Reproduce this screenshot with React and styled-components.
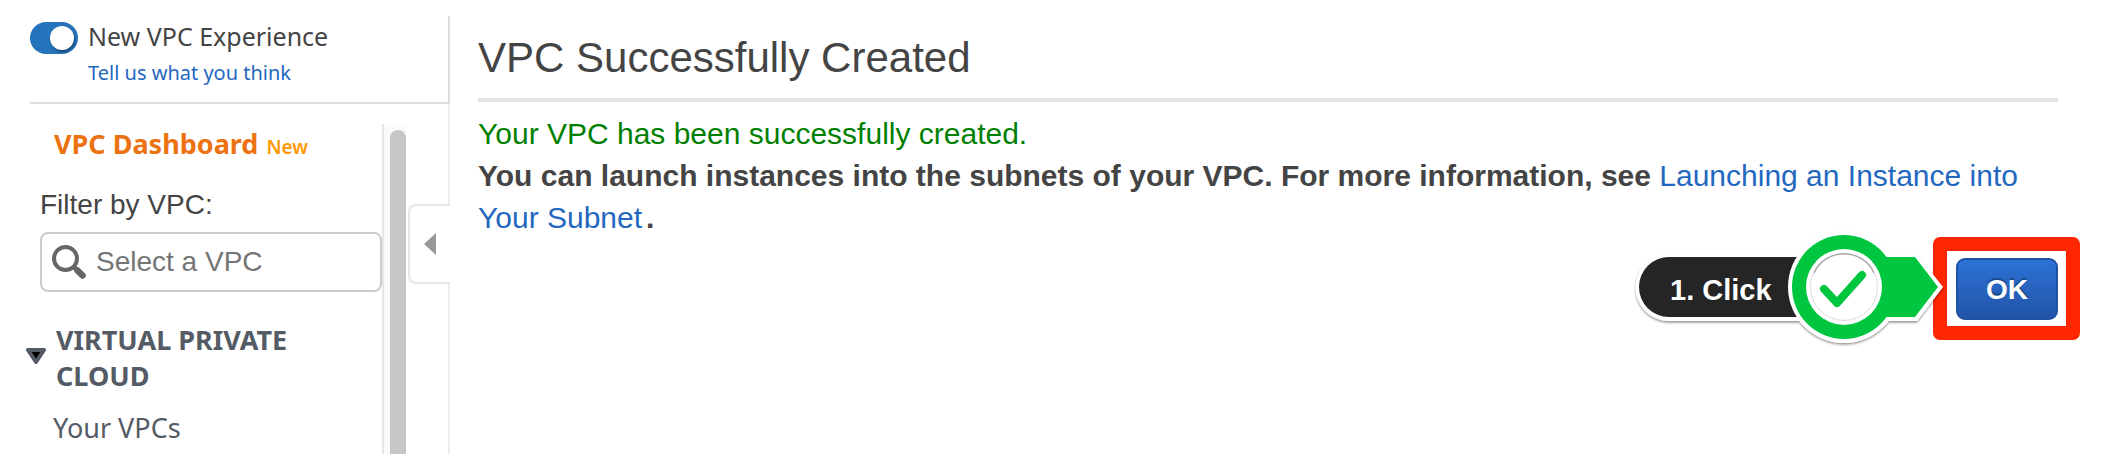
import React from "react";
import styled, { createGlobalStyle } from "styled-components";

const helvetica = `"Liberation Sans", Arial, sans-serif`;
const ember = `"Noto Sans", "Open Sans", sans-serif`;

const GlobalStyle = createGlobalStyle`
  *, *::before, *::after { box-sizing: border-box; }
  body { margin: 0; background: #fff; color: #444; font-family: ${helvetica}; }
  a { color: #2467bf; text-decoration: none; }
  button, input { font: inherit; color: inherit; }
`;

const Page = styled.div`
  display: flex;
  min-height: 100vh;
`;

const Sidebar = styled.aside`
  position: relative;
  flex: 0 0 450px;
  min-width: 0;
  display: flex;
  flex-direction: column;
  padding-top: 16px;
`;

const Experience = styled.div`
  display: flex;
  align-items: flex-start;
  gap: 10px;
  height: 88px;
  margin-left: 30px;
  padding-top: 6px;
  border-right: 2px solid #ddd;
  border-bottom: 2px solid #ddd;
  font-family: ${ember};
`;

const Toggle = styled.input`
  appearance: none;
  flex: none;
  display: flex;
  align-items: center;
  justify-content: flex-end;
  width: 48px;
  height: 32px;
  margin: 0;
  padding-right: 4px;
  border-radius: 16px;
  background: #2573bb;

  &::before {
    content: "";
    width: 24px;
    height: 24px;
    border-radius: 50%;
    background: #fff;
    box-shadow: 1px 2px 2px rgba(0, 0, 0, 0.35);
  }
  &:not(:checked) { justify-content: flex-start; padding: 0 4px; background: #879596; }
`;

const ExperienceText = styled.div`
  display: flex;
  flex-direction: column;
  gap: 8px;
  line-height: 28px;
`;

const ExperienceLabel = styled.label`
  font-size: 25px;
`;

const FeedbackLink = styled.a`
  font-size: 20px;
  line-height: 30px;
`;

const SidebarBody = styled.div`
  flex: 1;
  display: flex;
  border-right: 2px solid #eee;
  padding-top: 20px;
`;

const NavColumn = styled.nav`
  flex: 0 0 382px;
  min-width: 0;
  display: flex;
  flex-direction: column;
  color: #545b64;
  font-family: ${ember};
  font-size: 27px;
  line-height: 36px;
`;

const DashboardLink = styled.a`
  display: flex;
  align-items: baseline;
  gap: 8px;
  margin: 2px 0 0 54px;
  color: #ec7211;
  font-weight: 700;
`;

const NewTag = styled.span`
  color: #f90;
  font-size: 19px;
  font-weight: 600;
`;

const Filter = styled.div`
  margin: 22px 0 0 40px;
  display: flex;
  flex-direction: column;
  gap: 9px;
  color: #444;
  font-family: ${helvetica};
  font-size: 28px;
`;

const SearchBox = styled.div`
  display: flex;
  align-items: center;
  gap: 10px;
  height: 60px;
  padding: 0 10px;
  border: 2px solid #ccc;
  border-radius: 8px;

  svg { flex: none; }
`;

const SearchInput = styled.input`
  flex: 1;
  width: 100%;
  min-width: 0;
  padding: 0;
  border: 0;
  outline: 0;
  background: transparent;
  &::placeholder { color: #757575; opacity: 1; }
`;

const SectionButton = styled.button`
  display: flex;
  align-items: center;
  gap: 10px;
  margin: 30px 0 0 26px;
  padding: 0;
  border: 0;
  background: none;
  font-weight: 700;
  text-align: left;

  svg { flex: none; margin-bottom: 4px; }
  span { max-width: 260px; }
`;

const NavLink = styled.a`
  margin: 16px 0 0 53px;
  color: #545b64;
`;

const ScrollTrack = styled.div`
  width: 24px;
  padding-top: 6px;
  border-left: 2px solid #e6e6e6;
  background: #fafafa;
  display: flex;
  justify-content: flex-end;
`;

const ScrollThumb = styled.div`
  width: 16px;
  border-radius: 8px 8px 0 0;
  background: #c6c6c6;
`;

const CollapseButton = styled.button`
  position: absolute;
  top: 204px;
  right: 0;
  width: 42px;
  height: 80px;
  padding: 0 12px 0 14px;
  display: flex;
  align-items: center;
  border: 2px solid #e6e6e6;
  border-right: 0;
  border-radius: 8px 0 0 8px;
  background: #fff;
`;

const Main = styled.main`
  flex: 1;
  min-width: 0;
  padding: 32px 64px 0 28px;
`;

const Title = styled.h1`
  margin: 0;
  padding-bottom: 14px;
  border-bottom: 4px solid #e3e3e3;
  font-size: 42px;
  font-weight: 400;
  line-height: 52px;
`;

const Message = styled.p`
  margin: 0;
  font-size: 30px;
  line-height: 42px;
  font-weight: ${(p) => (p.$success ? 400 : 700)};
  color: ${(p) => (p.$success ? "#008000" : "#444")};

  a { font-weight: 400; margin-right: 4px; }
`;

const Messages = styled.div`
  padding-top: 11px;
`;

const Actions = styled.div`
  display: flex;
  justify-content: flex-end;
  padding-top: 19px;
`;

const Target = styled.div`
  position: relative;
`;

const OkButton = styled.button`
  display: block;
  width: 102px;
  height: 62px;
  padding: 2px 0 0;
  border: 2px solid #1f52a4;
  border-radius: 9px;
  background: linear-gradient(#2c72d4, #2254a8);
  color: #fff;
  font-size: 28px;
  font-weight: 700;
  text-shadow: 0 -2px 1px rgba(0, 0, 0, 0.3);
`;

const Highlight = styled.div`
  position: absolute;
  inset: -21px -22px -20px -23px;
  border: 14px solid #ff2600;
  border-radius: 7px;
  pointer-events: none;
`;

const Callout = styled.div`
  position: absolute;
  right: 100%;
  top: 50%;
  width: 324px;
  height: 116px;
  margin: -60px 10px 0 0;
  padding-top: 6px;
  display: flex;
  align-items: center;

  svg { position: absolute; inset: 0; overflow: visible; }
`;

const CalloutText = styled.span`
  position: relative;
  padding-left: 48px;
  color: #fff;
  font-size: 29px;
  font-weight: 700;
  line-height: 36px;
`;

function SearchIcon() {
  return (
    <svg width="34" height="34" viewBox="0 0 34 34" fill="none" stroke="#666" aria-hidden="true">
      <circle cx="13.500" cy="13.500" r="11.500" strokeWidth="4" />
      <path d="M22 22l3 3" strokeWidth="5" />
      <path d="M25.500 25.500l5 5" strokeWidth="6.500" strokeLinecap="round" />
    </svg>
  );
}

function CalloutShape() {
  return (
    <svg width="324" height="116" viewBox="0 0 324 116" aria-hidden="true">
      <defs>
        <filter id="lift" x="-10%" y="-10%" width="120%" height="120%">
          <feDropShadow dx="0" dy="1.500" stdDeviation="1" floodOpacity="0.450" />
        </filter>
      </defs>
      <g filter="url(#lift)">
        <path d="M47 25H295L321 58L295 92H47A33.500 33.500 0 0 1 47 25Z" fill="#fff" />
        <circle cx="222" cy="58" r="56" fill="#fff" />
      </g>
      <path d="M47 28H222V88H47A30 30 0 0 1 47 28Z" fill="#252525" />
      <circle cx="222" cy="58" r="56" fill="#fff" />
      <path d="M262 28H293L316 58L293 88H262Z" fill="#00c63f" />
      <circle cx="222" cy="58" r="52" fill="#00c63f" />
      <circle cx="222" cy="58" r="38" fill="#fff" />
      <circle cx="222" cy="58" r="33.500" fill="none" stroke="#ddd" />
      <path d="M192 44A33 33 0 0 1 252 44" fill="none" stroke="#aaa" strokeWidth="1.500" />
      <path d="M202 60L215 74L240 46" fill="none" stroke="#00c63f" strokeWidth="8" strokeLinecap="round" strokeLinejoin="round" />
    </svg>
  );
}

export default function App() {
  return (
    <>
      <GlobalStyle />
      <Page>
        <Sidebar>
          <Experience>
            <Toggle type="checkbox" id="experience" defaultChecked />
            <ExperienceText>
              <ExperienceLabel htmlFor="experience">New VPC Experience</ExperienceLabel>
              <FeedbackLink href="#feedback">Tell us what you think</FeedbackLink>
            </ExperienceText>
          </Experience>
          <SidebarBody>
            <NavColumn>
              <DashboardLink href="#dashboard">
                VPC Dashboard <NewTag>New</NewTag>
              </DashboardLink>
              <Filter>
                <label htmlFor="vpc-filter">Filter by VPC:</label>
                <SearchBox>
                  <SearchIcon />
                  <SearchInput id="vpc-filter" type="text" placeholder="Select a VPC" />
                </SearchBox>
              </Filter>
              <SectionButton type="button" aria-expanded="true">
                <svg width="20" height="16" viewBox="0 0 20 16" aria-hidden="true">
                  <path d="M2 2H18L10 14Z" fill="#000" stroke="#545b64" strokeWidth="4" strokeLinejoin="round" />
                </svg>
                <span>VIRTUAL PRIVATE CLOUD</span>
              </SectionButton>
              <NavLink href="#vpcs">Your VPCs</NavLink>
            </NavColumn>
            <ScrollTrack>
              <ScrollThumb />
            </ScrollTrack>
          </SidebarBody>
          <CollapseButton type="button" aria-label="Collapse navigation">
            <svg width="12" height="22" viewBox="0 0 12 22" aria-hidden="true">
              <path d="M12 0V22L0 11Z" fill="#999" />
            </svg>
          </CollapseButton>
        </Sidebar>
        <Main>
          <Title>VPC Successfully Created</Title>
          <Messages>
            <Message $success>Your VPC has been successfully created.</Message>
            <Message>
              You can launch instances into the subnets of your VPC. For more information, see{" "}
              <a href="#launching">Launching an Instance into Your Subnet</a>.
            </Message>
          </Messages>
          <Actions>
            <Target>
              <OkButton type="button">OK</OkButton>
              <Highlight />
              <Callout>
                <CalloutShape />
                <CalloutText>1. Click</CalloutText>
              </Callout>
            </Target>
          </Actions>
        </Main>
      </Page>
    </>
  );
}
